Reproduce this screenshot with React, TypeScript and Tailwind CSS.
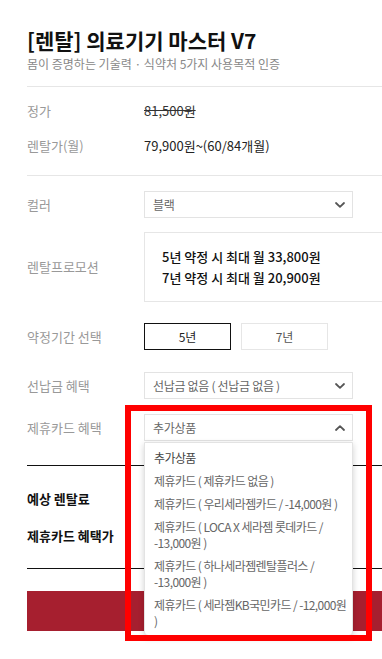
const FONT = { fontFamily: '"Noto Sans CJK KR", "Noto Sans", sans-serif' };

function Chevron({ up = false }: { up?: boolean }) {
  return (
    <svg width="10" height="6" viewBox="0 0 10 6" className="shrink-0">
      <path
        d={up ? "M1 5 L5 1.2 L9 5" : "M1 1 L5 4.8 L9 1"}
        fill="none"
        stroke="#555"
        strokeWidth="1.8"
        strokeLinecap="round"
        strokeLinejoin="round"
      />
    </svg>
  );
}

function Select({ label, open = false }: { label: string; open?: boolean }) {
  return (
    <div className="flex h-[27px] w-[209px] items-center justify-between border border-[#e3e3e3] bg-white pl-[8px] pr-[7px] text-[12px] tracking-[-0.3px] text-[#666]">
      <span>{label}</span>
      <Chevron up={open} />
    </div>
  );
}

function Row({ label, children, className = "" }: { label: string; children: React.ReactNode; className?: string }) {
  return (
    <div className={`flex items-center ${className}`}>
      <div className="w-[117px] shrink-0 text-[13px] text-[#999]">{label}</div>
      {children}
    </div>
  );
}

const OPTIONS = [
  ["추가상품"],
  ["제휴카드 ( 제휴카드 없음 )"],
  ["제휴카드 ( 우리세라젬카드 / -14,000원 )"],
  ["제휴카드 ( LOCA X 세라젬 롯데카드 /", "-13,000원 )"],
  ["제휴카드 ( 하나세라젬렌탈플러스 /", "-13,000원 )"],
  ["제휴카드 ( 세라젬KB국민카드 / -12,000원", ")"],
];

export default function App() {
  return (
    <div className="relative h-[659px] w-[382px] overflow-hidden bg-white pl-[27px]" style={FONT}>
      <div className="pt-[26px]">
        <h1 className="text-[21px] font-bold leading-[28px] text-[#111]">[렌탈] 의료기기 마스터 V7</h1>
        <p className="mt-[1px] text-[12px] leading-[18px] text-[#888]">몸이 증명하는 기술력 · 식약처 5가지 사용목적 인증</p>
      </div>

      <div className="mt-[13px] border-t border-[#e6e6e6]" />

      <Row label="정가" className="mt-[15px] h-[18px]">
        <span className="text-[13px] text-[#333] line-through">81,500원</span>
      </Row>
      <Row label="렌탈가(월)" className="mt-[17px] h-[18px]">
        <span className="text-[13px] text-[#222]">79,900원~(60/84개월)</span>
      </Row>

      <div className="mt-[20px] border-t border-[#e6e6e6]" />

      <Row label="컬러" className="mt-[15px]">
        <Select label="블랙" />
      </Row>

      <Row label="렌탈프로모션" className="mt-[14px]">
        <div className="flex h-[70px] flex-1 flex-col justify-center gap-[3px] border-y border-l border-[#e6e6e6] pl-[17px] text-[13px] font-medium leading-[18px] text-[#111]">
          <span>5년 약정 시 최대 월 33,800원</span>
          <span>7년 약정 시 최대 월 20,900원</span>
        </div>
      </Row>

      <Row label="약정기간 선택" className="mt-[21px]">
        <div className="flex gap-[10px]">
          <div className="flex h-[27px] w-[87px] items-center justify-center border border-[#111] text-[12px] text-[#222]">5년</div>
          <div className="flex h-[27px] w-[87px] items-center justify-center border border-[#e6e6e6] text-[12px] text-[#555]">7년</div>
        </div>
      </Row>

      <Row label="선납금 혜택" className="mt-[22px]">
        <Select label="선납금 없음 ( 선납금 없음 )" />
      </Row>

      <Row label="제휴카드 혜택" className="mt-[15px]">
        <Select label="추가상품" open />
      </Row>

      <div className="mt-[24px] border-t border-[#111]" />

      <div className="mt-[14px] flex h-[37px] items-center text-[13px] font-bold text-[#111]">예상 렌탈료</div>
      <div className="flex h-[37px] items-center text-[13px] font-bold text-[#111]">제휴카드 혜택가</div>

      <div className="mt-[14px] border-t border-[#111]" />

      <div className="mt-[22px] h-[40px] bg-[#a61f2f]" />

      {/* dropdown list */}
      <div className="absolute left-[144px] top-[442px] w-[209px] rounded-b-[4px] border border-[#e3e3e3] bg-white pt-[3px] pb-[3px] shadow-[0_2px_6px_rgba(0,0,0,0.18)]">
        {OPTIONS.map((lines, i) => (
          <div
            key={i}
            className={`whitespace-nowrap py-[3.5px] pl-[9px] text-[12px] leading-[16px] tracking-[-0.6px] ${i === 0 ? "text-[#444]" : "text-[#666]"}`}
          >
            {lines.map((l, j) => (
              <div key={j}>{l}</div>
            ))}
          </div>
        ))}
      </div>

      {/* red highlight annotation */}
      <div className="pointer-events-none absolute left-[125px] top-[405px] h-[236px] w-[247px] border-[6px] border-[#ff0000]" />
    </div>
  );
}
